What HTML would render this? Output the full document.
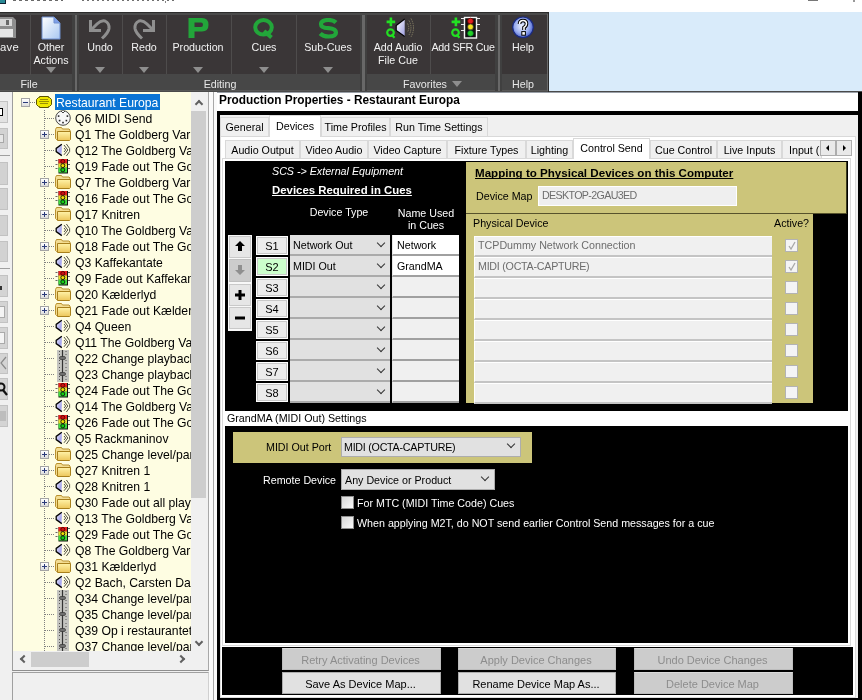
<!DOCTYPE html>
<html><head><meta charset="utf-8">
<style>
*{box-sizing:border-box;margin:0;padding:0}
html,body{width:862px;height:700px;overflow:hidden;will-change:transform;background:#f0f0f0;font-family:"Liberation Sans",sans-serif;font-size:10.7px;color:#000}
.a{position:absolute}
.t{position:absolute;white-space:nowrap;line-height:1}
/* toolbar */
#tb{left:0;top:12px;width:548px;height:80px;background:#3a3637;border-top:1px solid #2c2c2c;box-shadow:inset 0 2px 0 #4a4a4a}
.tbl{background:#474747}
.sep{position:absolute;width:1px;background:#4e4c4c}
.gsep{position:absolute;width:7px;background:linear-gradient(90deg,#404040 0 2.5px,#686868 2.5px 5px,#404040 5px 7px)}
.btxt{position:absolute;color:#f2f2f2;text-align:center;white-space:nowrap;line-height:12.5px;font-size:10.7px}
.tri{position:absolute;width:0;height:0;border-left:5px solid transparent;border-right:5px solid transparent;border-top:6px solid #8e8e8e}
/* tree */
.row{position:absolute;height:16px;white-space:nowrap;font-size:12.2px;line-height:17px;margin-top:1px}

.ico{position:absolute;left:55px;top:0;width:16px;height:16px}
.exp{position:absolute;left:40px;top:4px;width:9px;height:9px;border:1px solid #a5a5a5;background:linear-gradient(#fff,#dcdcdc)}
.dotv{position:absolute;width:1px;background-image:linear-gradient(#808080 50%,transparent 50%);background-size:1px 2px}
.doth{position:absolute;height:1px;background-image:linear-gradient(90deg,#808080 50%,transparent 50%);background-size:2px 1px}
/* tabs */
.tab{position:absolute;background:#f0f0f0;border:1px solid #d9d9d9;border-bottom:none;text-align:center;white-space:nowrap;line-height:18px;font-size:10.7px}
.tab.sel{background:#fff;border-color:#d9d9d9}
.sb{position:absolute;left:256px;width:32px;height:19px;background:#ececec;border:1px solid #fff;box-shadow:inset 0 0 0 1px #c8c8c8;text-align:center;line-height:18px;font-size:11px}
.cb{position:absolute;left:290px;width:100px;height:21px;background:#e1e1e1;border-bottom:2px solid #ababab}
.chev{position:absolute;width:7px;height:7px;border-right:1px solid #333;border-bottom:1px solid #333;transform:rotate(45deg)}
.nf{position:absolute;left:392px;width:67px;height:21px;background:#f0f0f0;border-bottom:2px solid #a0a0a0;border-left:1px solid #e8e8e8}
.pf{position:absolute;left:474px;width:298px;height:21px;background:#f0f0f0;border-top:1px solid #fff;border-left:1px solid #fff;border-bottom:2px solid #c4c4c4}
.ck{position:absolute;left:785px;width:13px;height:13px;background:#f4f4f4;border:1px solid #b3b3b3}
.btn{position:absolute;height:22px;background:#cccccc;border:1px solid #bdbdbd;border-top-color:#dadada;text-align:center;line-height:22px;color:#8d8d8d;font-size:11px;text-indent:-2px}
.btn.en{background:#e1e1e1;border-color:#adadad;color:#000}
</style></head><body>

<!-- title bar -->
<div class="a" style="left:0;top:0;width:862px;height:12px;background:#fff"></div>
<div class="a" style="left:0;top:0;width:6px;height:4px;background:#2a8a96;border-right:1px solid #123;border-bottom:1px solid #123"></div>
<div class="a" style="left:808px;top:0;width:10px;height:1px;background:#777"></div><div class="a" style="left:13px;top:0;width:50px;height:1px;background:repeating-linear-gradient(90deg,#6a6a6a 0 3px,transparent 3px 6px)"></div><div class="a" style="left:82px;top:0;width:94px;height:1px;background:repeating-linear-gradient(90deg,#707070 0 2px,transparent 2px 5px)"></div><div class="a" style="left:165px;top:1px;width:1px;height:2px;background:#888"></div><div class="a" style="left:853px;top:0;width:2px;height:2px;background:#999"></div>


<!-- light blue area -->
<div class="a" style="left:549px;top:12px;width:313px;height:80px;background:#d9ebfa"></div>

<!-- toolbar -->
<div id="tb" class="a"></div>
<div class="a tbl" style="left:0;top:74px;width:548px;height:17px"></div>
<div class="a" style="left:0;top:90px;width:548px;height:1px;background:#575757"></div><div class="a" style="left:0;top:91px;width:862px;height:1px;background:#4a4a4a"></div>

<!-- separators -->
<div class="sep" style="left:30px;top:15px;height:60px"></div>
<div class="gsep" style="left:72px;top:15px;height:76px"></div>
<div class="sep" style="left:122px;top:15px;height:59px"></div>
<div class="sep" style="left:166px;top:15px;height:59px"></div>
<div class="sep" style="left:231px;top:15px;height:59px"></div>
<div class="sep" style="left:296px;top:15px;height:59px"></div>
<div class="gsep" style="left:360px;top:15px;height:76px"></div>
<div class="sep" style="left:430px;top:15px;height:59px"></div>
<div class="gsep" style="left:495px;top:15px;height:76px"></div>
<div class="a" style="left:547px;top:14px;width:1px;height:77px;background:#6a6a6a"></div><div class="a" style="left:548px;top:12px;width:1px;height:80px;background:#2a2a2a"></div>

<!-- Save icon -->
<svg class="a" style="left:-4px;top:17px" width="21" height="22" viewBox="0 0 21 22">
<path d="M0 0H17L20 3V21H0Z" fill="#8e8e8e"/>
<rect x="4" y="2" width="12" height="7" fill="#d8d8d8"/><rect x="10" y="3" width="3" height="5" fill="#6a6a6a"/>
<rect x="3" y="12" width="14" height="8" fill="#e6e6e6"/>
</svg>
<div class="btxt" style="left:0;top:41px;text-align:left;font-size:11.3px;letter-spacing:0.3px">ave</div>

<!-- Other Actions -->
<svg class="a" style="left:41px;top:16px" width="20" height="24" viewBox="0 0 20 24">
<defs><linearGradient id="dg" x1="0" y1="0" x2="1" y2="1"><stop offset="0" stop-color="#ffffff"/><stop offset="1" stop-color="#a9c8f2"/></linearGradient></defs>
<path d="M1 1H13L19 7V23H1Z" fill="url(#dg)" stroke="#6f8fd0" stroke-width="1"/>
<path d="M13 1V7H19" fill="#7fa0e8" stroke="#6f8fd0"/>
</svg>
<div class="btxt" style="left:26px;top:41px;width:50px">Other<br>Actions</div>
<div class="tri" style="left:46px;top:67px"></div>

<!-- Undo -->
<svg class="a" style="left:88px;top:18px" width="24" height="22" viewBox="0 0 24 22">
<path d="M2.5 2V12.5H13" fill="none" stroke="#8f8f8f" stroke-width="3"/>
<path d="M2.5 12.5L9 6Q13 2 17 3Q21.5 5 21 10.5Q20.5 14.5 14 20.5" fill="none" stroke="#8f8f8f" stroke-width="3"/>
</svg>
<div class="btxt" style="left:75px;top:41px;width:50px">Undo</div>
<div class="tri" style="left:95px;top:67px"></div>

<!-- Redo -->
<svg class="a" style="left:132px;top:18px" width="24" height="22" viewBox="0 0 24 22" style="transform:scaleX(-1)">
<g transform="translate(24 0) scale(-1 1)">
<path d="M2.5 2V12.5H13" fill="none" stroke="#8f8f8f" stroke-width="3"/>
<path d="M2.5 12.5L9 6Q13 2 17 3Q21.5 5 21 10.5Q20.5 14.5 14 20.5" fill="none" stroke="#8f8f8f" stroke-width="3"/>
</g></svg>
<div class="btxt" style="left:119px;top:41px;width:50px">Redo</div>
<div class="tri" style="left:139px;top:67px"></div>

<!-- Production -->
<svg class="a" style="left:188px;top:18px" width="21" height="20" viewBox="0 0 21 20"><path fill="#22a63a" fill-rule="evenodd" d="M0.5 0H14Q20.5 0 20.5 6.8Q20.5 13.5 14 13.5H6.5V20H0.5Z M6.5 4.5V9H13Q15 9 15 6.8Q15 4.5 13 4.5Z"/></svg>
<div class="btxt" style="left:163px;top:41px;width:70px">Production</div>
<div class="tri" style="left:193px;top:67px"></div>

<!-- Cues -->
<svg class="a" style="left:253px;top:18px" width="22" height="21" viewBox="0 0 22 21"><ellipse cx="10.5" cy="9.3" rx="8.3" ry="7.3" fill="none" stroke="#22a63a" stroke-width="4"/><path d="M11 13L18.5 19.5" stroke="#22a63a" stroke-width="4"/></svg>
<div class="btxt" style="left:239px;top:41px;width:50px">Cues</div>
<div class="tri" style="left:259px;top:67px"></div>

<!-- Sub-Cues -->
<svg class="a" style="left:318px;top:18px" width="21" height="21" viewBox="0 0 21 21"><path d="M18 4.5Q15.5 2 10.5 2Q3 2 3 6.2Q3 9.7 10.5 10.2Q18 10.8 18 14.5Q18 18.5 10.5 18.5Q5 18.5 2.2 15.5" fill="none" stroke="#22a63a" stroke-width="4.2"/></svg>
<div class="btxt" style="left:298px;top:41px;width:60px">Sub-Cues</div>
<div class="tri" style="left:323px;top:67px"></div>

<!-- Add Audio File Cue -->
<svg class="a" style="left:384px;top:15px" width="34" height="25" viewBox="0 0 34 25">
<defs><linearGradient id="spg" x1="0" y1="0" x2="1" y2="1"><stop offset="0" stop-color="#ffffff"/><stop offset="1" stop-color="#9c9ce0"/></linearGradient></defs>
<path d="M2.6 6.9H11.2M6.9 2.6V11.2" stroke="#22e022" stroke-width="2.6"/>
<circle cx="6.5" cy="17.6" r="3.3" fill="none" stroke="#22e022" stroke-width="2.2"/><path d="M7.5 19.5L10.5 22.8" stroke="#22e022" stroke-width="2.2"/>
<path d="M12.2 10.5V15.4L20.7 21.5V4.1Z" fill="url(#spg)"/>
<path d="M20.7 4.1L12.2 10.5V15.4L20.7 21.5" fill="none" stroke="#000" stroke-width="1.2"/>
<path d="M23.5 8.5Q26 12.8 23.5 17M25 5.5Q29 12.8 25 20M27 3.5Q32 12.8 27 22" fill="none" stroke="#8a8468" stroke-width="0.9" stroke-dasharray="1.4 0.9"/>
</svg>
<div class="btxt" style="left:368px;top:41px;width:60px">Add Audio<br>File Cue</div>

<!-- Add SFR Cue -->
<svg class="a" style="left:448px;top:14px" width="34" height="26" viewBox="0 0 34 26">
<path d="M3.6 7.9H12.2M7.9 3.6V12.2" stroke="#22e022" stroke-width="2.6"/>
<circle cx="7.5" cy="18.6" r="3.3" fill="none" stroke="#22e022" stroke-width="2.2"/><path d="M8.5 20.5L11.5 23.8" stroke="#22e022" stroke-width="2.2"/>
<rect x="16.5" y="3.5" width="12" height="20.5" fill="#111" stroke="#f4f4f4" stroke-width="1.4"/>
<circle cx="22.5" cy="7.1" r="2.9" fill="#e02020" stroke="#600" stroke-width="0.8"/>
<circle cx="22.5" cy="12.9" r="2.9" fill="#f2e21c" stroke="#333" stroke-width="0.6"/>
<circle cx="22.5" cy="19.3" r="2.9" fill="#25d025" stroke="#063" stroke-width="0.6"/>
<path d="M13 4.5H16M13 10.5H16M13 16.5H16M29 4.5H32M29 10.5H32M29 16.5H32" stroke="#eee" stroke-width="1.2"/>
</svg>
<div class="btxt" style="left:428px;top:41px;width:70px;letter-spacing:-0.25px">Add SFR Cue</div>

<!-- Help -->
<svg class="a" style="left:511px;top:16px" width="24" height="23" viewBox="0 0 24 23">
<defs><radialGradient id="hg" cx="0.45" cy="0.45" r="0.6"><stop offset="0" stop-color="#f0f4ff"/><stop offset="0.6" stop-color="#98acf0"/><stop offset="1" stop-color="#3a52c0"/></radialGradient></defs>
<circle cx="12" cy="11.3" r="10.3" fill="url(#hg)" stroke="#1a2a80" stroke-width="1.2"/>
<path d="M8.5 8Q8.5 4.5 12 4.5Q15.5 4.5 15.5 7.8Q15.5 10 13 11.5V14" fill="none" stroke="#000" stroke-width="3.6"/>
<path d="M8.5 8Q8.5 4.5 12 4.5Q15.5 4.5 15.5 7.8Q15.5 10 13 11.5V14" fill="none" stroke="#fff" stroke-width="1.6"/>
<rect x="10.8" y="15.6" width="3.6" height="3.6" fill="#fff" stroke="#000" stroke-width="1"/>
</svg>
<div class="btxt" style="left:498px;top:41px;width:50px">Help</div>

<!-- group labels -->
<div class="btxt" style="left:0;top:78px;width:58px;color:#e8e8e8">File</div>
<div class="btxt" style="left:180px;top:78px;width:80px;color:#e8e8e8">Editing</div>
<div class="btxt" style="left:395px;top:78px;width:60px;color:#e8e8e8">Favorites</div>
<div class="tri" style="left:452px;top:81px"></div>
<div class="btxt" style="left:498px;top:78px;width:50px;color:#e8e8e8">Help</div>
<div class="a" style="left:0;top:92px;width:12px;height:608px;background:#f0f0f0"></div>
<div class="a" style="left:-2px;top:101px;width:10px;height:22px;background:#e2e2e2;border:1px solid #c2c2c2"></div><div class="a" style="left:-2px;top:128px;width:10px;height:21px;background:#d2d2d2;border:1px solid #c2c2c2"></div><div class="a" style="left:-2px;top:162px;width:10px;height:23px;background:#d2d2d2;border:1px solid #c2c2c2"></div><div class="a" style="left:-2px;top:188px;width:10px;height:22px;background:#d2d2d2;border:1px solid #c2c2c2"></div><div class="a" style="left:-2px;top:215px;width:10px;height:21px;background:#d2d2d2;border:1px solid #c2c2c2"></div><div class="a" style="left:-2px;top:241px;width:10px;height:21px;background:#d2d2d2;border:1px solid #c2c2c2"></div><div class="a" style="left:-2px;top:275px;width:10px;height:22px;background:#d4d4d4;border:1px solid #c2c2c2"></div><div class="a" style="left:-2px;top:301px;width:10px;height:22px;background:#d4d4d4;border:1px solid #c2c2c2"></div><div class="a" style="left:-2px;top:327px;width:10px;height:22px;background:#d4d4d4;border:1px solid #c2c2c2"></div><div class="a" style="left:-2px;top:353px;width:10px;height:21px;background:#d4d4d4;border:1px solid #c2c2c2"></div><div class="a" style="left:-2px;top:378px;width:10px;height:22px;background:#d4d4d4;border:1px solid #c2c2c2"></div><div class="a" style="left:-2px;top:405px;width:10px;height:22px;background:#d4d4d4;border:1px solid #c2c2c2"></div>
<div class="a" style="left:0;top:108px;width:3px;height:8px;background:#fff;border:1px solid #000;border-left:0"></div><div class="a" style="left:0;top:134px;width:4px;height:9px;background:#e6e6e6;border:1px solid #a8a8a8;border-left:0"></div><div class="a" style="left:0;top:286px;width:2px;height:4px;background:#333"></div><div class="a" style="left:0;top:306px;width:5px;height:12px;background:#f4f4f4;border:1px solid #aaa;border-left:0"></div><div class="a" style="left:0;top:332px;width:5px;height:12px;background:#f4f4f4;border:1px solid #aaa;border-left:0"></div><svg class="a" style="left:0;top:356px" width="8" height="14"><path d="M6 1L1 7L6 13" fill="none" stroke="#8a8a8a" stroke-width="1.2"/></svg><svg class="a" style="left:0;top:381px" width="8" height="16"><circle cx="1" cy="6" r="3.5" fill="none" stroke="#111" stroke-width="2"/><path d="M3 9L7 14" stroke="#111" stroke-width="2.2"/></svg><div class="a" style="left:0;top:411px;width:6px;height:10px;background:#bdbdbd"></div>
<div class="a" style="left:0;top:155px;width:10px;height:1px;background:#a0a0a0"></div><div class="a" style="left:0;top:268px;width:10px;height:1px;background:#a0a0a0"></div>
<svg width="0" height="0" style="position:absolute">
<defs>
<linearGradient id="fg" x1="0" y1="0" x2="0" y2="1"><stop offset="0" stop-color="#fff3a8"/><stop offset="1" stop-color="#ecc65a"/></linearGradient>
<linearGradient id="sg" x1="0" y1="0" x2="1" y2="1"><stop offset="0" stop-color="#f4f4ff"/><stop offset="0.7" stop-color="#a4a4ec"/><stop offset="1" stop-color="#d8d8ff"/></linearGradient>
<symbol id="i-folder" viewBox="0 0 16 16"><path d="M0.5 3.5L1.5 1.5H6.5L7.5 3H14L15 4V12.5L13.5 13.5H1.5L0.5 12.5Z" fill="#f3dd92" stroke="#b8902e"/><path d="M2.5 5.5H15.5V13.5L14.5 14.5H2.5Z" fill="url(#fg)" stroke="#a8801c"/></symbol>
<symbol id="i-spk" viewBox="0 0 16 16"><path d="M6.8 2.2L1.2 6.4V9.6L6.8 13.6Z" fill="url(#sg)"/><path d="M6.8 2.2L1.2 6.4V9.6L6.8 13.6" fill="none" stroke="#000" stroke-width="1.3"/><path d="M9 6L10.7 8L9 10M9 3L12.8 8L9 12.8M11.4 2L14.6 6.5V9.5L11.4 14" fill="none" stroke="#4a4a3c" stroke-width="0.95"/></symbol>
<symbol id="i-tl" viewBox="0 0 16 16"><rect x="3.5" y="1" width="9.5" height="14.5" fill="#111"/><rect x="3.5" y="1" width="8.5" height="4.6" fill="#e82020"/><rect x="3.5" y="5.4" width="8.5" height="4.4" fill="#e8e030"/><rect x="3.5" y="9.6" width="8.5" height="4.9" fill="#40e040"/><circle cx="7.8" cy="3.4" r="2" fill="#c81010" stroke="#500" stroke-width="0.9"/><circle cx="7.8" cy="7.6" r="2" fill="#f0e000" stroke="#111" stroke-width="0.9"/><circle cx="7.8" cy="11.9" r="2" fill="#10d010" stroke="#111" stroke-width="0.9"/><path d="M0.5 2.5H2.5M0.5 6.5H2.5M0.5 10.5H2.5M13 2.5H15M13 6.5H15M13 10.5H15" stroke="#666"/></symbol>
<symbol id="i-tl2" viewBox="0 0 16 16"><rect x="3.5" y="1" width="9.5" height="14.5" fill="#333"/><rect x="3.5" y="1" width="8.5" height="13.5" fill="#f8f8e0"/><circle cx="7.8" cy="3.4" r="2" fill="#d01010" stroke="#500" stroke-width="0.9"/><circle cx="7.8" cy="7.6" r="2" fill="#e8d800" stroke="#111" stroke-width="0.9"/><circle cx="7.8" cy="11.9" r="2" fill="#10c010" stroke="#111" stroke-width="0.9"/><path d="M0.5 2.5H2.5M0.5 6.5H2.5M0.5 10.5H2.5M13 2.5H15M13 6.5H15M13 10.5H15" stroke="#666"/></symbol>
<symbol id="i-midi" viewBox="0 0 16 16"><circle cx="8" cy="8" r="7.3" fill="#f8f8f8" stroke="#333" stroke-width="0.9"/><path d="M6 1L8 3L10 1" fill="#fff" stroke="#333" stroke-width="0.9"/><g fill="#222"><rect x="2.8" y="5.3" width="1.6" height="1.6"/><rect x="11.6" y="5.3" width="1.6" height="1.6"/><rect x="3.8" y="9.8" width="1.6" height="1.6"/><rect x="10.6" y="9.8" width="1.6" height="1.6"/><rect x="7.2" y="11.8" width="1.6" height="1.6"/></g></symbol>
<symbol id="i-sl" viewBox="0 0 16 16"><rect x="2" y="0" width="12" height="16" fill="#c4c4c0"/><path d="M7.5 0V16" stroke="#333" stroke-width="1.2"/><g fill="#555"><rect x="4" y="1" width="1" height="1"/><rect x="4" y="4" width="1" height="1"/><rect x="4" y="10" width="1" height="1"/><rect x="4" y="13" width="1" height="1"/><rect x="10.5" y="1" width="1" height="1"/><rect x="10.5" y="4" width="1" height="1"/><rect x="10.5" y="10" width="1" height="1"/><rect x="10.5" y="13" width="1" height="1"/></g><rect x="4.5" y="6.5" width="6" height="3" rx="1.4" fill="#707070" stroke="#333" stroke-width="0.7"/></symbol>
<symbol id="i-root" viewBox="0 0 16 16"><path d="M0.5 5.5L2.5 3.5H3.5V2.5H12.5V3.5H13.5L15.5 5.5V10.5L13.5 12.5H12.5V13.5H3.5V12.5H2.5L0.5 10.5Z" fill="#f0e800" stroke="#5c5400"/><path d="M4 5.5H12M3 7.5H13M4 9.5H12" stroke="#9a9000"/></symbol>
</defs></svg>
<div class="a" style="left:12px;top:92px;width:197px;height:579px;background:#fefde2;border-left:1px solid #9d9d9d;border-right:1px solid #a8a8a8;border-bottom:1px solid #8f8f8f;overflow:hidden">
<div class="dotv" style="left:31px;top:18px;height:550px"></div>
<div class="exp" style="left:8px;top:6px;width:9px;height:9px"><div class="a" style="left:1px;top:3px;width:5px;height:1px;background:#2a3a7a"></div></div><div class="doth" style="left:17px;top:10px;width:6px"></div><svg class="a" style="left:23px;top:2px" width="16" height="16"><use href="#i-root"/></svg><div class="a" style="left:42px;top:2px;width:105px;height:16px;background:#0a74d4"></div><div class="row" style="left:43px;top:2px;color:#fff">Restaurant Europa</div>
<div class="doth" style="left:32px;top:26px;width:10px"></div><svg class="a" style="left:42px;top:18px" width="16" height="16"><use href="#i-midi"/></svg><div class="row" style="left:62px;top:18px">Q6 MIDI Send</div>
<div class="exp" style="left:27px;top:38px"><div class="a" style="left:1px;top:3px;width:5px;height:1px;background:#2a3a7a"></div><div class="a" style="left:3px;top:1px;width:1px;height:5px;background:#2a3a7a"></div></div><div class="doth" style="left:36px;top:42px;width:6px"></div><svg class="a" style="left:42px;top:34px" width="16" height="16"><use href="#i-folder"/></svg><div class="row" style="left:62px;top:34px">Q1 The Goldberg Variations</div>
<div class="doth" style="left:32px;top:58px;width:10px"></div><svg class="a" style="left:42px;top:50px" width="16" height="16"><use href="#i-spk"/></svg><div class="row" style="left:62px;top:50px">Q12 The Goldberg Variations</div>
<div class="doth" style="left:32px;top:74px;width:10px"></div><svg class="a" style="left:42px;top:66px" width="16" height="16"><use href="#i-tl"/></svg><div class="row" style="left:62px;top:66px">Q19 Fade out The Goldberg</div>
<div class="exp" style="left:27px;top:86px"><div class="a" style="left:1px;top:3px;width:5px;height:1px;background:#2a3a7a"></div><div class="a" style="left:3px;top:1px;width:1px;height:5px;background:#2a3a7a"></div></div><div class="doth" style="left:36px;top:90px;width:6px"></div><svg class="a" style="left:42px;top:82px" width="16" height="16"><use href="#i-folder"/></svg><div class="row" style="left:62px;top:82px">Q7 The Goldberg Variations</div>
<div class="doth" style="left:32px;top:106px;width:10px"></div><svg class="a" style="left:42px;top:98px" width="16" height="16"><use href="#i-tl"/></svg><div class="row" style="left:62px;top:98px">Q16 Fade out The Goldberg</div>
<div class="exp" style="left:27px;top:118px"><div class="a" style="left:1px;top:3px;width:5px;height:1px;background:#2a3a7a"></div><div class="a" style="left:3px;top:1px;width:1px;height:5px;background:#2a3a7a"></div></div><div class="doth" style="left:36px;top:122px;width:6px"></div><svg class="a" style="left:42px;top:114px" width="16" height="16"><use href="#i-folder"/></svg><div class="row" style="left:62px;top:114px">Q17 Knitren</div>
<div class="doth" style="left:32px;top:138px;width:10px"></div><svg class="a" style="left:42px;top:130px" width="16" height="16"><use href="#i-spk"/></svg><div class="row" style="left:62px;top:130px">Q10 The Goldberg Variations</div>
<div class="exp" style="left:27px;top:150px"><div class="a" style="left:1px;top:3px;width:5px;height:1px;background:#2a3a7a"></div><div class="a" style="left:3px;top:1px;width:1px;height:5px;background:#2a3a7a"></div></div><div class="doth" style="left:36px;top:154px;width:6px"></div><svg class="a" style="left:42px;top:146px" width="16" height="16"><use href="#i-folder"/></svg><div class="row" style="left:62px;top:146px">Q18 Fade out The Goldberg</div>
<div class="doth" style="left:32px;top:170px;width:10px"></div><svg class="a" style="left:42px;top:162px" width="16" height="16"><use href="#i-spk"/></svg><div class="row" style="left:62px;top:162px">Q3 Kaffekantate</div>
<div class="doth" style="left:32px;top:186px;width:10px"></div><svg class="a" style="left:42px;top:178px" width="16" height="16"><use href="#i-tl"/></svg><div class="row" style="left:62px;top:178px">Q9 Fade out Kaffekantate</div>
<div class="exp" style="left:27px;top:198px"><div class="a" style="left:1px;top:3px;width:5px;height:1px;background:#2a3a7a"></div><div class="a" style="left:3px;top:1px;width:1px;height:5px;background:#2a3a7a"></div></div><div class="doth" style="left:36px;top:202px;width:6px"></div><svg class="a" style="left:42px;top:194px" width="16" height="16"><use href="#i-folder"/></svg><div class="row" style="left:62px;top:194px">Q20 Kælderlyd</div>
<div class="exp" style="left:27px;top:214px"><div class="a" style="left:1px;top:3px;width:5px;height:1px;background:#2a3a7a"></div><div class="a" style="left:3px;top:1px;width:1px;height:5px;background:#2a3a7a"></div></div><div class="doth" style="left:36px;top:218px;width:6px"></div><svg class="a" style="left:42px;top:210px" width="16" height="16"><use href="#i-folder"/></svg><div class="row" style="left:62px;top:210px">Q21 Fade out Kælderlyd</div>
<div class="doth" style="left:32px;top:234px;width:10px"></div><svg class="a" style="left:42px;top:226px" width="16" height="16"><use href="#i-spk"/></svg><div class="row" style="left:62px;top:226px">Q4 Queen</div>
<div class="doth" style="left:32px;top:250px;width:10px"></div><svg class="a" style="left:42px;top:242px" width="16" height="16"><use href="#i-spk"/></svg><div class="row" style="left:62px;top:242px">Q11 The Goldberg Variations</div>
<div class="doth" style="left:32px;top:266px;width:10px"></div><svg class="a" style="left:42px;top:258px" width="16" height="16"><use href="#i-sl"/></svg><div class="row" style="left:62px;top:258px">Q22 Change playback</div>
<div class="doth" style="left:32px;top:282px;width:10px"></div><svg class="a" style="left:42px;top:274px" width="16" height="16"><use href="#i-sl"/></svg><div class="row" style="left:62px;top:274px">Q23 Change playback</div>
<div class="doth" style="left:32px;top:298px;width:10px"></div><svg class="a" style="left:42px;top:290px" width="16" height="16"><use href="#i-tl"/></svg><div class="row" style="left:62px;top:290px">Q24 Fade out The Goldberg</div>
<div class="doth" style="left:32px;top:314px;width:10px"></div><svg class="a" style="left:42px;top:306px" width="16" height="16"><use href="#i-spk"/></svg><div class="row" style="left:62px;top:306px">Q14 The Goldberg Variations</div>
<div class="doth" style="left:32px;top:330px;width:10px"></div><svg class="a" style="left:42px;top:322px" width="16" height="16"><use href="#i-tl"/></svg><div class="row" style="left:62px;top:322px">Q26 Fade out The Goldberg</div>
<div class="doth" style="left:32px;top:346px;width:10px"></div><svg class="a" style="left:42px;top:338px" width="16" height="16"><use href="#i-spk"/></svg><div class="row" style="left:62px;top:338px">Q5 Rackmaninov</div>
<div class="exp" style="left:27px;top:358px"><div class="a" style="left:1px;top:3px;width:5px;height:1px;background:#2a3a7a"></div><div class="a" style="left:3px;top:1px;width:1px;height:5px;background:#2a3a7a"></div></div><div class="doth" style="left:36px;top:362px;width:6px"></div><svg class="a" style="left:42px;top:354px" width="16" height="16"><use href="#i-folder"/></svg><div class="row" style="left:62px;top:354px">Q25 Change level/pan</div>
<div class="exp" style="left:27px;top:374px"><div class="a" style="left:1px;top:3px;width:5px;height:1px;background:#2a3a7a"></div><div class="a" style="left:3px;top:1px;width:1px;height:5px;background:#2a3a7a"></div></div><div class="doth" style="left:36px;top:378px;width:6px"></div><svg class="a" style="left:42px;top:370px" width="16" height="16"><use href="#i-folder"/></svg><div class="row" style="left:62px;top:370px">Q27 Knitren 1</div>
<div class="doth" style="left:32px;top:394px;width:10px"></div><svg class="a" style="left:42px;top:386px" width="16" height="16"><use href="#i-spk"/></svg><div class="row" style="left:62px;top:386px">Q28 Knitren 1</div>
<div class="exp" style="left:27px;top:406px"><div class="a" style="left:1px;top:3px;width:5px;height:1px;background:#2a3a7a"></div><div class="a" style="left:3px;top:1px;width:1px;height:5px;background:#2a3a7a"></div></div><div class="doth" style="left:36px;top:410px;width:6px"></div><svg class="a" style="left:42px;top:402px" width="16" height="16"><use href="#i-folder"/></svg><div class="row" style="left:62px;top:402px">Q30 Fade out all playing</div>
<div class="doth" style="left:32px;top:426px;width:10px"></div><svg class="a" style="left:42px;top:418px" width="16" height="16"><use href="#i-spk"/></svg><div class="row" style="left:62px;top:418px">Q13 The Goldberg Variations</div>
<div class="doth" style="left:32px;top:442px;width:10px"></div><svg class="a" style="left:42px;top:434px" width="16" height="16"><use href="#i-tl"/></svg><div class="row" style="left:62px;top:434px">Q29 Fade out The Goldberg</div>
<div class="doth" style="left:32px;top:458px;width:10px"></div><svg class="a" style="left:42px;top:450px" width="16" height="16"><use href="#i-spk"/></svg><div class="row" style="left:62px;top:450px">Q8 The Goldberg Variations</div>
<div class="exp" style="left:27px;top:470px"><div class="a" style="left:1px;top:3px;width:5px;height:1px;background:#2a3a7a"></div><div class="a" style="left:3px;top:1px;width:1px;height:5px;background:#2a3a7a"></div></div><div class="doth" style="left:36px;top:474px;width:6px"></div><svg class="a" style="left:42px;top:466px" width="16" height="16"><use href="#i-folder"/></svg><div class="row" style="left:62px;top:466px">Q31 Kælderlyd</div>
<div class="doth" style="left:32px;top:490px;width:10px"></div><svg class="a" style="left:42px;top:482px" width="16" height="16"><use href="#i-spk"/></svg><div class="row" style="left:62px;top:482px">Q2 Bach, Carsten Dahl</div>
<div class="doth" style="left:32px;top:506px;width:10px"></div><svg class="a" style="left:42px;top:498px" width="16" height="16"><use href="#i-sl"/></svg><div class="row" style="left:62px;top:498px">Q34 Change level/pan</div>
<div class="doth" style="left:32px;top:522px;width:10px"></div><svg class="a" style="left:42px;top:514px" width="16" height="16"><use href="#i-sl"/></svg><div class="row" style="left:62px;top:514px">Q35 Change level/pan</div>
<div class="doth" style="left:32px;top:538px;width:10px"></div><svg class="a" style="left:42px;top:530px" width="16" height="16"><use href="#i-sl"/></svg><div class="row" style="left:62px;top:530px">Q39 Op i restaurantet</div>
<div class="doth" style="left:32px;top:554px;width:10px"></div><svg class="a" style="left:42px;top:546px" width="16" height="16"><use href="#i-sl"/></svg><div class="row" style="left:62px;top:546px">Q37 Change level/pan</div>
<div class="a" style="left:178px;top:0;width:17px;height:559px;background:#f0f0f0"></div><div class="a" style="left:178px;top:19px;width:15px;height:387px;background:#cdcdcd"></div><div class="chev" style="left:183px;top:9px;width:6px;height:6px;transform:rotate(225deg);border-color:#606060;border-width:2px"></div><div class="chev" style="left:183px;top:547px;width:6px;height:6px;border-color:#606060;border-width:2px"></div><div class="a" style="left:0;top:559px;width:195px;height:19px;background:#f0f0f0"></div><div class="a" style="left:18px;top:560px;width:58px;height:15px;background:#cdcdcd"></div><div class="chev" style="left:8px;top:564px;width:6px;height:6px;transform:rotate(135deg);border-color:#606060;border-width:2px"></div><div class="chev" style="left:165px;top:564px;width:6px;height:6px;transform:rotate(-45deg);border-color:#606060;border-width:2px"></div></div>
<div class="a" style="left:12px;top:672px;width:197px;height:30px;background:#f0f0f0;border:1px solid #a0a0a0;border-right-color:#d0d0d0"></div>
<div class="a" style="left:209px;top:92px;width:8px;height:608px;background:#fafafa;border-left:0"></div><div class="a" style="left:213px;top:92px;width:1px;height:608px;background:#a8a8a8"></div>

<!-- main panel -->
<div class="a" style="left:217px;top:92px;width:645px;height:608px;background:#000"></div>
<div class="a" style="left:217px;top:92px;width:641px;height:19px;background:#fff;border-top:1px solid #9aa0a8"></div>
<div class="t" style="left:219px;top:95px;font-size:11.85px;font-weight:bold">Production Properties - Restaurant Europa</div>
<div class="a" style="left:220px;top:115px;width:638px;height:583px;background:#f0f0f0"></div>

<!-- tabs row 1 -->
<div class="a" style="left:220px;top:136px;width:636px;height:562px;background:#fff;border:1px solid #dcdcdc;border-top-color:#d9d9d9"></div>
<div class="tab" style="left:220px;top:117px;width:49px;height:19px">General</div>
<div class="tab sel" style="left:269px;top:115px;width:52px;height:22px;border-bottom:0;line-height:20px">Devices</div>
<div class="tab" style="left:321px;top:117px;width:69px;height:19px">Time Profiles</div>
<div class="tab" style="left:390px;top:117px;width:98px;height:19px">Run Time Settings</div>

<!-- tabs row 2 -->
<div class="a" style="left:222px;top:158px;width:629px;height:488px;background:#fff;border:1px solid #d9d9d9"></div>
<div class="tab" style="left:225px;top:140px;width:75px;height:18px;line-height:18px">Audio Output</div>
<div class="tab" style="left:300px;top:140px;width:68px;height:18px;line-height:18px">Video Audio</div>
<div class="tab" style="left:368px;top:140px;width:79px;height:18px;line-height:18px">Video Capture</div>
<div class="tab" style="left:447px;top:140px;width:79px;height:18px;line-height:18px">Fixture Types</div>
<div class="tab" style="left:526px;top:140px;width:47px;height:18px;line-height:18px">Lighting</div>
<div class="tab sel" style="left:573px;top:138px;width:77px;height:21px;line-height:19px">Control Send</div>
<div class="tab" style="left:650px;top:140px;width:67px;height:18px;line-height:18px">Cue Control</div>
<div class="tab" style="left:717px;top:140px;width:65px;height:18px;line-height:18px">Live Inputs</div>
<div class="tab" style="left:782px;top:140px;width:40px;height:18px;line-height:18px;text-align:left;padding-left:6px;overflow:hidden">Input (MIDI)</div>
<div class="a" style="left:820px;top:140px;width:16px;height:16px;background:#e9e9e9;border:1px solid #adadad"><div class="a" style="left:5px;top:4px;width:0;height:0;border-top:3px solid transparent;border-bottom:3px solid transparent;border-right:3px solid #000"></div></div>
<div class="a" style="left:836px;top:140px;width:16px;height:16px;background:#e9e9e9;border:1px solid #adadad"><div class="a" style="left:6px;top:4px;width:0;height:0;border-top:3px solid transparent;border-bottom:3px solid transparent;border-left:3px solid #000"></div></div>

<!-- upper black -->
<div class="a" style="left:225px;top:161px;width:623px;height:250px;background:#000"></div>
<div class="t" style="left:272px;top:166px;color:#fff;font-style:italic;font-size:10.7px">SCS -&gt; External Equipment</div>
<div class="t" style="left:272px;top:185px;color:#fff;font-weight:bold;font-size:11.4px;text-decoration:underline;text-decoration-skip-ink:none">Devices Required in Cues</div>
<div class="t" style="left:300px;top:207px;width:78px;text-align:center;color:#fff">Device Type</div>
<div class="t" style="left:390px;top:207px;width:72px;text-align:center;color:#fff;line-height:12px">Name Used<br>in Cues</div>

<!-- arrow panel -->
<div class="a" style="left:228px;top:235px;width:24px;height:96px;background:#f8f8f8"></div>
<div class="a" style="left:229px;top:236px;width:22px;height:22px;background:#e6e6e6;border:1px solid #c9c9c9"></div>
<div class="a" style="left:229px;top:259px;width:22px;height:23px;background:#cccccc;border:1px solid #c0c0c0"></div>
<div class="a" style="left:229px;top:284px;width:22px;height:22px;background:#e6e6e6;border:1px solid #c9c9c9"></div>
<div class="a" style="left:229px;top:307px;width:22px;height:22px;background:#e6e6e6;border:1px solid #c9c9c9"></div>
<svg class="a" style="left:234px;top:240px" width="12" height="12" viewBox="0 0 12 12"><path d="M6 1L11 6H8V11H4V6H1Z" fill="#000"/></svg>
<svg class="a" style="left:234px;top:264px" width="12" height="12" viewBox="0 0 12 12"><path d="M6 11L11 6H8V1H4V6H1Z" fill="#8f8f8f"/></svg>
<svg class="a" style="left:234px;top:289px" width="12" height="12" viewBox="0 0 12 12"><path d="M4.5 1H7.5V4.5H11V7.5H7.5V11H4.5V7.5H1V4.5H4.5Z" fill="#000"/></svg>
<svg class="a" style="left:234px;top:312px" width="12" height="12" viewBox="0 0 12 12"><rect x="1" y="4.5" width="10" height="3" fill="#000"/></svg>

<!-- olive -->
<div class="a" style="left:466px;top:162px;width:381px;height:52px;background:#ccc57a;border-right:1px solid #3a3a20;border-bottom:1px solid #57532c"></div>
<div class="a" style="left:466px;top:214px;width:347px;height:189px;background:#ccc57a"></div>
<div class="t" style="left:475px;top:167px;font-weight:bold;font-size:11.6px;text-decoration:underline;text-decoration-skip-ink:none">Mapping to Physical Devices on this Computer</div>
<div class="t" style="left:476px;top:191px">Device Map</div>
<div class="a" style="left:538px;top:186px;width:199px;height:20px;background:#efefef;border:1px solid #fff"></div>
<div class="t" style="left:542px;top:190px;color:#6d6d6d;letter-spacing:-0.65px">DESKTOP-2GAU3ED</div>
<div class="t" style="left:473px;top:218px">Physical Device</div>
<div class="t" style="left:774px;top:218px">Active?</div>
<div class="sb" style="top:236px;background:#ececec">S1</div><div class="cb" style="top:235px"></div><div class="chev" style="left:378px;top:240px;width:6px;height:6px"></div><div class="nf" style="top:235px;background:#fff"></div><div class="pf" style="top:236px"></div><div class="ck" style="top:239px"></div>
<div class="sb" style="top:257px;background:#ccffcc">S2</div><div class="cb" style="top:256px"></div><div class="chev" style="left:378px;top:261px;width:6px;height:6px"></div><div class="nf" style="top:256px;background:#fff"></div><div class="pf" style="top:257px"></div><div class="ck" style="top:260px"></div>
<div class="sb" style="top:278px;background:#ececec">S3</div><div class="cb" style="top:277px"></div><div class="chev" style="left:378px;top:282px;width:6px;height:6px"></div><div class="nf" style="top:277px;background:#f0f0f0"></div><div class="pf" style="top:278px"></div><div class="ck" style="top:281px"></div>
<div class="sb" style="top:299px;background:#ececec">S4</div><div class="cb" style="top:298px"></div><div class="chev" style="left:378px;top:303px;width:6px;height:6px"></div><div class="nf" style="top:298px;background:#f0f0f0"></div><div class="pf" style="top:299px"></div><div class="ck" style="top:302px"></div>
<div class="sb" style="top:320px;background:#ececec">S5</div><div class="cb" style="top:319px"></div><div class="chev" style="left:378px;top:324px;width:6px;height:6px"></div><div class="nf" style="top:319px;background:#f0f0f0"></div><div class="pf" style="top:320px"></div><div class="ck" style="top:323px"></div>
<div class="sb" style="top:341px;background:#ececec">S6</div><div class="cb" style="top:340px"></div><div class="chev" style="left:378px;top:345px;width:6px;height:6px"></div><div class="nf" style="top:340px;background:#f0f0f0"></div><div class="pf" style="top:341px"></div><div class="ck" style="top:344px"></div>
<div class="sb" style="top:362px;background:#ececec">S7</div><div class="cb" style="top:361px"></div><div class="chev" style="left:378px;top:366px;width:6px;height:6px"></div><div class="nf" style="top:361px;background:#f0f0f0"></div><div class="pf" style="top:362px"></div><div class="ck" style="top:365px"></div>
<div class="sb" style="top:383px;background:#ececec">S8</div><div class="cb" style="top:382px"></div><div class="chev" style="left:378px;top:387px;width:6px;height:6px"></div><div class="nf" style="top:382px;background:#f0f0f0"></div><div class="pf" style="top:383px"></div><div class="ck" style="top:386px"></div>

<div class="t" style="left:293px;top:240px">Network Out</div>
<div class="t" style="left:293px;top:261px">MIDI Out</div>
<div class="t" style="left:397px;top:240px">Network</div>
<div class="t" style="left:397px;top:261px">GrandMA</div>
<div class="t" style="left:478px;top:240px;color:#6d6d6d">TCPDummy Network Connection</div>
<div class="t" style="left:478px;top:261px;color:#6d6d6d;letter-spacing:-0.25px">MIDI (OCTA-CAPTURE)</div>
<svg class="a" style="left:786px;top:240px" width="12" height="12"><path d="M3 6L5 9L9 2" fill="none" stroke="#a8a8a8" stroke-width="1.3"/></svg>
<svg class="a" style="left:786px;top:261px" width="12" height="12"><path d="M3 6L5 9L9 2" fill="none" stroke="#a8a8a8" stroke-width="1.3"/></svg>

<!-- label bar -->
<div class="a" style="left:225px;top:411px;width:623px;height:15px;background:#fff"></div>
<div class="t" style="left:227px;top:413px">GrandMA (MIDI Out) Settings</div>

<!-- lower black -->
<div class="a" style="left:225px;top:426px;width:623px;height:217px;background:#000"></div>
<div class="a" style="left:233px;top:432px;width:299px;height:31px;background:#ccc57a"></div>
<div class="t" style="left:266px;top:442px">MIDI Out Port</div>
<div class="a" style="left:341px;top:437px;width:180px;height:20px;background:#e1e1e1;border:1px solid #adadad"></div>
<div class="t" style="left:344px;top:442px;letter-spacing:-0.25px">MIDI (OCTA-CAPTURE)</div>
<div class="chev" style="left:508px;top:441px;width:6px;height:6px"></div>
<div class="t" style="left:263px;top:475px;color:#fff">Remote Device</div>
<div class="a" style="left:341px;top:469px;width:154px;height:21px;background:#e1e1e1;border:1px solid #adadad"></div>
<div class="t" style="left:345px;top:475px">Any Device or Product</div>
<div class="chev" style="left:482px;top:474px;width:6px;height:6px"></div>
<div class="a" style="left:341px;top:496px;width:13px;height:13px;background:linear-gradient(135deg,#d8d8d8,#fafafa);border:1px solid #8e8e8e"></div>
<div class="t" style="left:357px;top:498px;color:#fff">For MTC (MIDI Time Code) Cues</div>
<div class="a" style="left:341px;top:516px;width:13px;height:13px;background:linear-gradient(135deg,#d8d8d8,#fafafa);border:1px solid #8e8e8e"></div>
<div class="t" style="left:357px;top:518px;color:#fff">When applying M2T, do NOT send earlier Control Send messages for a cue</div>

<!-- bottom bar -->
<div class="a" style="left:222px;top:647px;width:631px;height:48px;background:#000"></div>
<div class="btn" style="left:282px;top:648px;width:159px">Retry Activating Devices</div>
<div class="btn" style="left:458px;top:648px;width:158px">Apply Device Changes</div>
<div class="btn" style="left:634px;top:648px;width:159px">Undo Device Changes</div>
<div class="btn en" style="left:282px;top:672px;width:159px">Save As Device Map...</div>
<div class="btn en" style="left:458px;top:672px;width:158px">Rename Device Map As...</div>
<div class="btn" style="left:634px;top:672px;width:159px">Delete Device Map</div>
</body></html>
